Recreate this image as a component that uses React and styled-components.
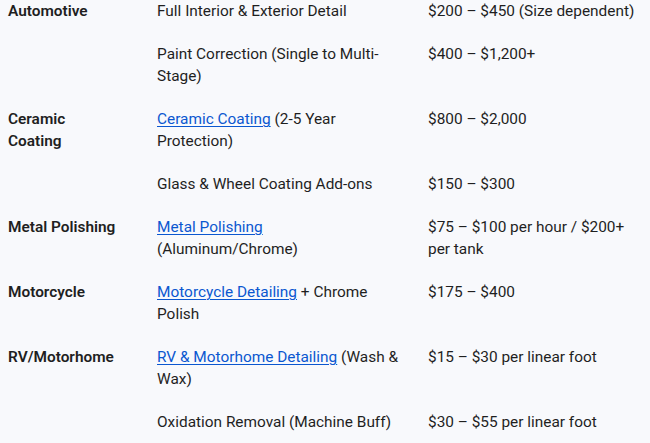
import React from "react";
import styled, { createGlobalStyle } from "styled-components";

const Global = createGlobalStyle`
  html, body { margin: 0; padding: 0; background: #f8f9fc; }
  body { font-family: Roboto, "Noto Sans", Arial, sans-serif; color: #1f1f1f; }
`;

const Page = styled.div`
  padding: 0 0 0 8px;
  overflow: hidden;
  width: 650px;
  height: 443px;
  box-sizing: border-box;
`;

const Table = styled.table`
  border-collapse: collapse;
  table-layout: fixed;
  width: 650px;
  margin-top: -10px;
  font-size: 15.4px;
  line-height: 22px;
`;

const Cell = styled.td`
  vertical-align: top;
  padding: 10px ${(p) => p.$pr || 16}px 11px 0;
  text-align: left;
  box-sizing: border-box;
`;

const Category = styled(Cell)`
  font-weight: 600;
  color: #1f1f1f;
`;

const Link = styled.a`
  color: #0b57d0;
  text-decoration: underline;
  text-underline-offset: 2px;
  text-decoration-thickness: 1px;
`;

const rows = [
  { cat: "Automotive", span: 2, link: null, text: "Full Interior & Exterior Detail", price: "$200 – $450 (Size dependent)" },
  { link: null, text: "Paint Correction (Single to Multi-Stage)", price: "$400 – $1,200+" },
  { cat: "Ceramic Coating", span: 2, link: "Ceramic Coating", text: " (2-5 Year Protection)", price: "$800 – $2,000" },
  { link: null, text: "Glass & Wheel Coating Add-ons", price: "$150 – $300" },
  { cat: "Metal Polishing", span: 1, link: "Metal Polishing", text: " (Aluminum/Chrome)", price: "$75 – $100 per hour / $200+ per tank" },
  { cat: "Motorcycle", span: 1, link: "Motorcycle Detailing", text: " + Chrome Polish", price: "$175 – $400" },
  { cat: "RV/Motorhome", span: 2, link: "RV & Motorhome Detailing", text: " (Wash & Wax)", price: "$15 – $30 per linear foot" },
  { link: null, text: "Oxidation Removal (Machine Buff)", price: "$30 – $55 per linear foot" },
];

export default function App() {
  return (
    <Page>
      <Global />
      <Table>
        <colgroup>
          <col style={{ width: 149 }} />
          <col style={{ width: 271 }} />
          <col style={{ width: 230 }} />
        </colgroup>
        <tbody>
          {rows.map((r, i) => (
            <tr key={i}>
              {r.cat && <Category rowSpan={r.span} $pr={36}>{r.cat}</Category>}
              <Cell $pr={24}>
                {r.link && <Link href="#">{r.link}</Link>}
                {r.text}
              </Cell>
              <Cell $pr={16}>{r.price}</Cell>
            </tr>
          ))}
        </tbody>
      </Table>
    </Page>
  );
}
